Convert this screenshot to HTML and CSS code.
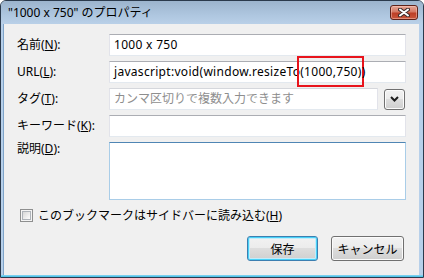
FILE: index.html
```html
<!DOCTYPE html>
<html lang="ja">
<head>
<meta charset="UTF-8">
<title>"1000 x 750" のプロパティ</title>
<link rel="stylesheet" href="styles.css">
</head>
<body>
    <div class="window">
        <div class="titlebar">
            <span class="title">"1000 x 750" のプロパティ</span>
            <button class="close">
                <svg width="12" height="9" viewBox="0 0 12 9">
                    <path d="M2 1.5 L10 7.5 M10 1.5 L2 7.5" stroke="#3a2a2a" stroke-width="4" stroke-linecap="round"/>
                    <path d="M2 1.5 L10 7.5 M10 1.5 L2 7.5" stroke="#ffffff" stroke-width="2" stroke-linecap="round"/>
                </svg>
            </button>
        </div>
        <div class="client">
            <div class="form">
                <span class="label">名前(<u>N</u>):</span>
                <div class="field latin">1000 x 750</div>

                <span class="label">URL(<u>L</u>):</span>
                <div class="field latin">javascript:void(window.resizeTo<span class="mark">(1000,750)</span>)</div>

                <span class="label">タグ(<u>T</u>):</span>
                <div class="tag-row">
                    <div class="field placeholder">カンマ区切りで複数入力できます</div>
                    <button class="drop">
                        <svg width="9" height="6" viewBox="0 0 9 6">
                            <polyline points="1,1 4.5,4.5 8,1" fill="none" stroke="#1e1e1e" stroke-width="2"/>
                        </svg>
                    </button>
                </div>

                <span class="label">キーワード(<u>K</u>):</span>
                <div class="field"></div>

                <span class="label top">説明(<u>D</u>):</span>
                <div class="field area"></div>
            </div>

            <div class="check">
                <span class="box"><span class="box-inner"></span></span>
                <span>このブックマークはサイドバーに読み込む(<u>H</u>)</span>
            </div>

            <div class="buttons">
                <button class="btn default">保存</button>
                <button class="btn">キャンセル</button>
            </div>
        </div>
    </div>
</body>
</html>
```

FILE: styles.css
```css
/* dialog window */
body {
    margin: 0;
    font-family: "Noto Sans", "Noto Sans CJK JP", sans-serif;
    font-size: 12px;
    color: #000;
    background: #fff;
}
.window {
    box-sizing: border-box;
    width: 424px;
    height: 278px;
    border: 1px solid #2b3a4c;
    border-radius: 6px 6px 0 0;
    padding: 0 4px 2px 2px;
    display: flex;
    flex-direction: column;
    background: linear-gradient(to top, #3fbde6 0, #8fd6f0 2px, #b7d0ea 2px);
}
.titlebar {
    height: 23px;
    flex: none;
    display: flex;
    justify-content: space-between;
    align-items: flex-start;
    margin: 0 -4px 0 -2px;
    padding: 0 5px 0 7px;
    border-radius: 5px 5px 0 0;
    background: linear-gradient(#9cb4cd, #aec6df 60%, #b9d0e8);
}
.title {
    line-height: 23px;
    white-space: nowrap;
}
.close {
    width: 28px;
    height: 15px;
    margin-top: 4px;
    padding: 0;
    border: 1px solid #5e2219;
    border-radius: 3px;
    background: linear-gradient(#e7a797, #d47863 45%, #bd3f27 55%, #c9563b);
    box-shadow: inset 0 0 0 1px rgba(255, 210, 200, 0.45);
    display: flex;
    align-items: center;
    justify-content: center;
}

/* client area */
.client {
    flex: 1;
    background: #f0f0f0;
    border-left: 1px solid #7fa4c9;
    padding: 10px 13px 0 13px;
}
.form {
    display: grid;
    grid-template-columns: 92px 1fr;
    row-gap: 5px;
}
.label {
    align-self: center;
    line-height: 16px;
    white-space: nowrap;
}
.label.top {
    align-self: start;
    line-height: 14px;
}
.field {
    box-sizing: border-box;
    height: 22px;
    line-height: 20px;
    padding: 0 4px;
    background: #fff;
    border: 1px solid #e2e3ea;
    border-top-color: #abadb3;
    border-bottom-color: #e3e9ef;
    white-space: nowrap;
}
.latin {
    letter-spacing: 0.3px;
}
.placeholder {
    color: #8e8e8e;
    flex: 1;
    border-top-color: #d5d7dc;
}
.area {
    height: 58px;
    border-color: #a9cde8;
    border-top-color: #4f86b4;
}
.mark {
    border: 2px solid #e8141c;
    padding: 5px 0 5px 1px;
    margin: 0 -2px 0 -3px;
}
.tag-row {
    display: flex;
    align-items: center;
    gap: 6px;
}
.drop {
    width: 21px;
    height: 21px;
    padding: 0;
    margin-right: 1px;
    border: 1px solid #707070;
    border-radius: 3px;
    background: linear-gradient(#f2f2f2, #ebebeb 50%, #dddddd 50%, #cfcfcf);
    box-shadow: inset 0 0 0 1px #fcfcfc;
    display: flex;
    align-items: center;
    justify-content: center;
}

/* checkbox */
.check {
    display: flex;
    align-items: center;
    gap: 5px;
    margin: 9px 0 0 3px;
    line-height: 13px;
}
.box {
    box-sizing: border-box;
    width: 13px;
    height: 13px;
    border: 1px solid #8e8f8f;
    background: #f4f4f4;
    padding: 1px;
    flex: none;
}
.box-inner {
    display: block;
    width: 9px;
    height: 9px;
    box-sizing: border-box;
    border: 1px solid #aeb3b9;
    background: linear-gradient(135deg, #d7d7d7, #fdfdfd);
}

/* buttons */
.buttons {
    display: flex;
    justify-content: flex-end;
    gap: 13px;
    margin: 14px 2px 0 0;
}
.btn {
    height: 25px;
    width: 73px;
    padding: 0;
    font-family: inherit;
    font-size: 12px;
    color: #000;
    border: 1px solid #707070;
    border-radius: 3px;
    background: linear-gradient(#f2f2f2, #ebebeb 50%, #dddddd 50%, #cfcfcf);
    box-shadow: inset 0 0 0 1px #fbfbfb;
}
.btn.default {
    width: 71px;
    border-color: #3c7fb1;
    box-shadow: inset 0 0 0 1px #48d1f7, inset 0 0 0 2px #c2ecfb;
}
```
